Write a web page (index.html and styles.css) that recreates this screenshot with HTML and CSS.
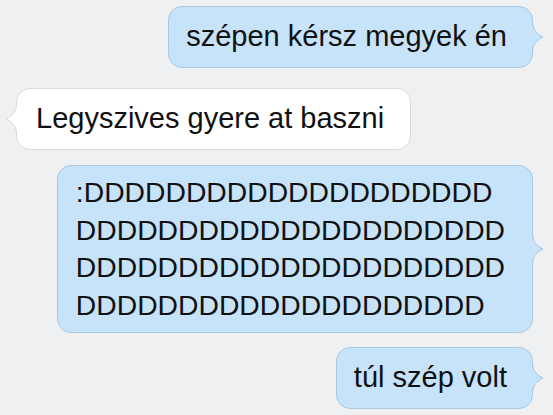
FILE: index.html
```html
<!DOCTYPE html>
<html lang="hu">
<head>
    <meta charset="UTF-8">
    <meta name="viewport" content="width=device-width, initial-scale=1.0">
    <title>Üzenetek</title>
    <link rel="stylesheet" href="styles.css">
</head>
<body>
    <div class="chat">
        <div class="row out">
            <div class="bubble sent">
                szépen kérsz megyek én
                <svg class="tail" viewBox="0 0 12 28" width="12" height="28"><path class="tail-fill" d="M0 0 C1 8 5 11 11 14 C5 17 1 20 0 28 Z"/><path class="tail-line" d="M0.5 0 C1.5 8 5 11 11 14 C5 17 1.5 20 0.5 28"/></svg>
            </div>
        </div>

        <div class="row in">
            <div class="bubble received">
                Legyszives gyere at baszni
                <svg class="tail" viewBox="0 0 12 28" width="12" height="28"><path class="tail-fill" d="M12 0 C11 8 7 11 1 14 C7 17 11 20 12 28 Z"/><path class="tail-line" d="M11.5 0 C10.5 8 7 11 1 14 C7 17 10.5 20 11.5 28"/></svg>
            </div>
        </div>

        <div class="row out">
            <div class="bubble sent long">
                :DDDDDDDDDDDDDDDDDDDD<br>
                DDDDDDDDDDDDDDDDDDDDD<br>
                DDDDDDDDDDDDDDDDDDDDD<br>
                DDDDDDDDDDDDDDDDDDDD
                <svg class="tail" viewBox="0 0 12 28" width="12" height="28"><path class="tail-fill" d="M0 0 C1 8 5 11 11 14 C5 17 1 20 0 28 Z"/><path class="tail-line" d="M0.5 0 C1.5 8 5 11 11 14 C5 17 1.5 20 0.5 28"/></svg>
            </div>
        </div>

        <div class="row out">
            <div class="bubble sent">
                túl szép volt
                <svg class="tail" viewBox="0 0 12 28" width="12" height="28"><path class="tail-fill" d="M0 0 C1 8 5 11 11 14 C5 17 1 20 0 28 Z"/><path class="tail-line" d="M0.5 0 C1.5 8 5 11 11 14 C5 17 1.5 20 0.5 28"/></svg>
            </div>
        </div>
    </div>
</body>
</html>
```

FILE: styles.css
```css
body {
    margin: 0;
    background: #eff0f2;
    font-family: "Liberation Sans", Arial, sans-serif;
}

.chat {
    display: flex;
    flex-direction: column;
    padding: 6px 20px 0 16px;
}

.row {
    display: flex;
    margin-top: 14px;
}

.row:first-child {
    margin-top: 0;
}

.row.out {
    justify-content: flex-end;
}

.row.in {
    justify-content: flex-start;
    margin-top: 20px;
}

.row.in + .row {
    margin-top: 15px;
}

.bubble {
    position: relative;
    font-size: 29px;
    line-height: 37px;
    color: #111;
    padding: 11px 25px 12px 17px;
    border-radius: 14px;
}

.bubble.long {
    font-size: 28.3px;
    padding: 8px 27px 8px 18px;
    line-height: 37.5px;
}

.bubble.sent {
    background: #c6e3fa;
    border: 1px solid #a9c8e2;
}

.bubble.received {
    background: #fff;
    border: 1px solid #d9dadc;
    padding-left: 19px;
    padding-right: 26px;
}

.tail {
    position: absolute;
    top: 50%;
    margin-top: -14px;
}

.sent .tail {
    right: -12px;
}

.received .tail {
    left: -12px;
}

.sent .tail-fill {
    fill: #c6e3fa;
}

.sent .tail-line {
    fill: none;
    stroke: #a9c8e2;
    stroke-width: 1;
}

.received .tail-fill {
    fill: #fff;
}

.received .tail-line {
    fill: none;
    stroke: #d9dadc;
    stroke-width: 1;
}
```
